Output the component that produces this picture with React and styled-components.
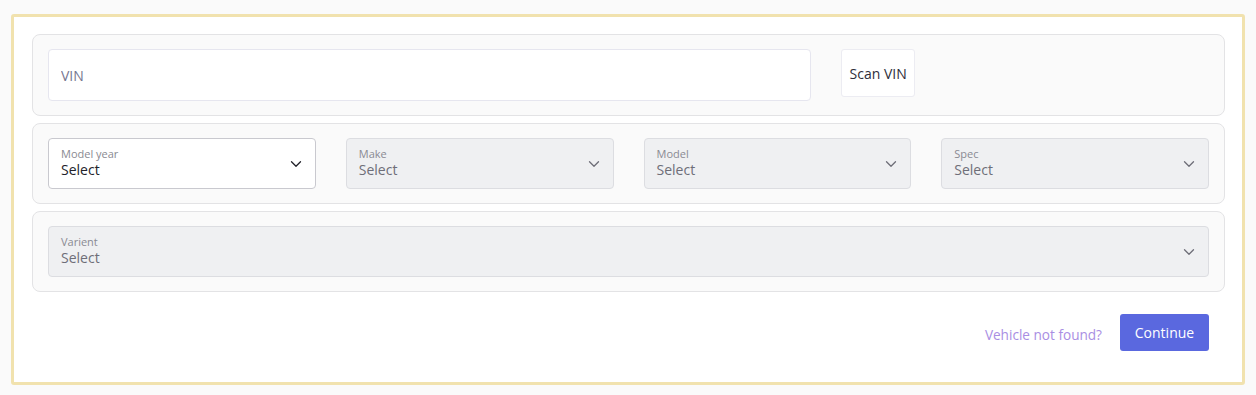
import React from 'react';
import styled, { createGlobalStyle } from 'styled-components';

const Global = createGlobalStyle`
    body {
        margin: 0;
        background: #fafafa;
        font-family: "Open Sans", "Noto Sans", sans-serif;
    }
`;

const Pagina = styled.div`
    padding: 14px 11px 9px 11px;
`;

const Tarjeta = styled.div`
    background: #fff;
    border: 3px solid #f1e2ae;
    border-radius: 3px;
    padding: 17px 17px 31px 18px;
    display: flex;
    flex-direction: column;
    gap: 7px;
`;

const Seccion = styled.div`
    background: #fafafa;
    border: 1px solid #e3e3e5;
    border-radius: 8px;
    padding: 14px 15px 14px 15px;
    display: flex;
    align-items: flex-start;
    gap: 30px;
`;

const Cuadricula = styled(Seccion)`
    display: grid;
    grid-template-columns: repeat(4, 1fr);
    gap: 30px;
`;

const InputVin = styled.input`
    box-sizing: border-box;
    width: 763px;
    height: 52px;
    border: 1px solid #e6e6ef;
    border-radius: 4px;
    background: #fff;
    padding: 0 12px;
    font-family: inherit;
    font-size: 14px;
    outline: none;

    &::placeholder {
        color: #777790;
    }
`;

const BotonScan = styled.button`
    height: 48px;
    padding: 0 7.5px;
    border: 1px solid #ececf2;
    border-radius: 3px;
    background: #fff;
    color: #2e2e3a;
    font-family: inherit;
    font-size: 14px;
    cursor: pointer;
`;

const Selector = styled.div`
    box-sizing: border-box;
    height: 51px;
    display: flex;
    align-items: center;
    justify-content: space-between;
    padding: 0 12px 0 12px;
    border-radius: 4px;
    border: 1px solid ${p => (p.disabled ? '#dcdde1' : '#c9c9cf')};
    background: ${p => (p.disabled ? '#eff0f2' : '#fff')};
    color: ${p => (p.disabled ? '#6e6e78' : '#22222a')};
`;

const Textos = styled.div`
    display: flex;
    flex-direction: column;
`;

const Etiqueta = styled.span`
    font-size: 11px;
    line-height: 13px;
    color: #8a8a92;
`;

const Valor = styled.span`
    font-size: 14px;
    line-height: 20px;
`;

const Pie = styled.div`
    display: flex;
    justify-content: flex-end;
    align-items: center;
    gap: 18px;
    margin-top: 15px;
    padding-right: 16px;
`;

const Enlace = styled.a`
    color: #a98ee3;
    font-size: 13.6px;
    cursor: pointer;
    margin-top: 4px;
`;

const Continuar = styled.button`
    width: 89px;
    height: 37px;
    border: none;
    border-radius: 3px;
    background: #5a68df;
    color: #fff;
    font-family: inherit;
    font-size: 14px;
    cursor: pointer;
`;

const Flecha = ({ disabled }) => (
    <svg width="14" height="14" viewBox="0 0 14 14" fill="none">
        <path
            d="M2.5 4.8 L7 9.2 L11.5 4.8"
            stroke={disabled ? '#6e6e78' : '#22222a'}
            strokeWidth="1.3"
            strokeLinecap="round"
            strokeLinejoin="round"
        />
    </svg>
);

const Select = ({ etiqueta, disabled }) => (
    <Selector disabled={disabled}>
        <Textos>
            <Etiqueta>{etiqueta}</Etiqueta>
            <Valor>Select</Valor>
        </Textos>
        <Flecha disabled={disabled} />
    </Selector>
);

const App = () => {
    return (
        <Pagina>
            <Global />
            <Tarjeta>
                <Seccion>
                    <InputVin placeholder="VIN" />
                    <BotonScan>Scan VIN</BotonScan>
                </Seccion>
                <Cuadricula>
                    <Select etiqueta="Model year" />
                    <Select etiqueta="Make" disabled />
                    <Select etiqueta="Model" disabled />
                    <Select etiqueta="Spec" disabled />
                </Cuadricula>
                <Seccion>
                    <div style={{ flex: 1 }}>
                        <Select etiqueta="Varient" disabled />
                    </div>
                </Seccion>
                <Pie>
                    <Enlace>Vehicle not found?</Enlace>
                    <Continuar>Continue</Continuar>
                </Pie>
            </Tarjeta>
        </Pagina>
    );
}

export default App;
